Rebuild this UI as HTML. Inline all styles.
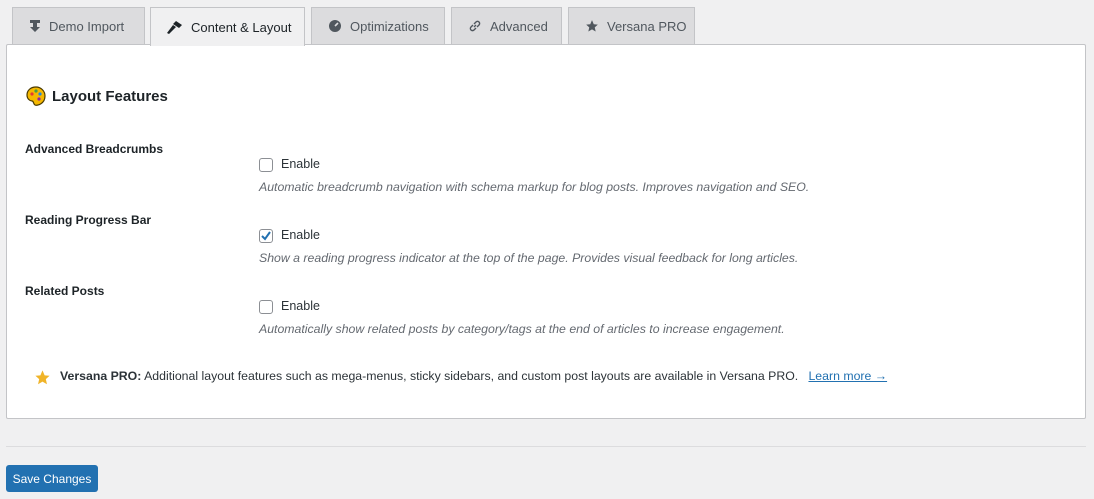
<!DOCTYPE html>
<html><head><meta charset="utf-8"><style>
*{box-sizing:border-box;margin:0;padding:0}
body{width:1094px;height:499px;background:#f0f0f1;font-family:"Liberation Sans",sans-serif;font-size:13px;color:#1d2327;position:relative;overflow:hidden}
.tab{position:absolute;top:7px;height:37px;background:#dcdcde;border:1px solid #c3c4c7;border-bottom:none;color:#50575e;font-size:13px;display:flex;align-items:center;padding-left:16px;gap:8px}
.tab.active{background:#f0f0f1;color:#1d2327;height:39px;z-index:2}
.panel{position:absolute;left:6px;top:44px;width:1080px;height:375px;background:#fff;border:1px solid #c3c4c7;border-radius:2px}
.abs{position:absolute;white-space:nowrap}
.lbl{font-weight:bold;font-size:12px;color:#1d2327}
.cb{position:absolute;width:14px;height:14px;border:1px solid #8c8f94;border-radius:3px;background:#fff}
.en{font-size:12.5px;color:#2c3338}
.desc{font-style:italic;font-size:12.3px;color:#646970}
</style></head><body>
<div class="tab" style="left:12px;width:133px"><svg width="12" height="14" viewBox="0 0 12 14"><path d="M1 1h10v3H1zM4 4h4v4h3l-5 5-5-5h3z" fill="#50575e"/></svg>Demo Import</div>
<div class="tab active" style="left:150px;width:155px"><svg width="16" height="14" viewBox="0 0 16 14"><path d="M9 1l6 4-3 3-6-4zM6 5l3 2-7 7-2-1z" fill="#1d2327"/></svg>Content &amp; Layout</div>
<div class="tab" style="left:311px;width:134px"><svg width="14" height="14" viewBox="0 0 14 14"><circle cx="7" cy="7" r="6" fill="#50575e"/><path d="M7 7l3-3" stroke="#dcdcde" stroke-width="1.6"/></svg>Optimizations</div>
<div class="tab" style="left:451px;width:111px"><svg width="14" height="14" viewBox="0 0 14 14"><path d="M6 8l2-2M5 6L3 8a2 2 0 003 3l2-2M9 8l2-2a2 2 0 00-3-3L6 5" stroke="#50575e" stroke-width="1.4" fill="none"/></svg>Advanced</div>
<div class="tab" style="left:568px;width:127px"><svg width="14" height="14" viewBox="0 0 24 24"><path d="M12 2l3 7 7 .6-5.3 4.7 1.6 7.2L12 17.8 5.7 21.5l1.6-7.2L2 9.6 9 9z" fill="#50575e"/></svg>Versana PRO</div>
<div class="panel"></div>
<svg class="abs" style="left:26px;top:86px" width="20" height="20" viewBox="0 0 20 20"><path d="M10 1C4 1 1 5 1 9c0 4 3 6 5 6 2 0 1 3 3 4 2 1 10-1 10-9 0-5-4-9-9-9z" fill="#f5b800" stroke="#4a3a00" stroke-width="1.2"/><circle cx="6" cy="8" r="1.6" fill="#e53935"/><circle cx="10" cy="5" r="1.6" fill="#43a047"/><circle cx="14" cy="8" r="1.6" fill="#1e88e5"/><circle cx="13" cy="13" r="1.6" fill="#8e24aa"/></svg>
<div class="abs" style="left:52px;top:88px;font-size:15px;font-weight:bold">Layout Features</div>
<div class="abs lbl" style="left:25px;top:142px">Advanced Breadcrumbs</div>
<div class="cb" style="left:259px;top:158px"></div>
<div class="abs en" style="left:281px;top:157px">Enable</div>
<div class="abs desc" style="left:259px;top:180px">Automatic breadcrumb navigation with schema markup for blog posts. Improves navigation and SEO.</div>
<div class="abs lbl" style="left:25px;top:213px">Reading Progress Bar</div>
<div class="cb" style="left:259px;top:229px"><svg width="12" height="12" viewBox="0 0 12 12" style="position:absolute;left:0;top:0"><path d="M2 6l3 3 5-7" stroke="#2271b1" stroke-width="2" fill="none"/></svg></div>
<div class="abs en" style="left:281px;top:228px">Enable</div>
<div class="abs desc" style="left:259px;top:251px">Show a reading progress indicator at the top of the page. Provides visual feedback for long articles.</div>
<div class="abs lbl" style="left:25px;top:284px">Related Posts</div>
<div class="cb" style="left:259px;top:300px"></div>
<div class="abs en" style="left:281px;top:299px">Enable</div>
<div class="abs desc" style="left:259px;top:322px">Automatically show related posts by category/tags at the end of articles to increase engagement.</div>
<svg class="abs" style="left:34px;top:369px" width="17" height="17" viewBox="0 0 24 24"><path d="M12 2l3 7 7 .6-5.3 4.7 1.6 7.2L12 17.8 5.7 21.5l1.6-7.2L2 9.6 9 9z" fill="#f0b429"/></svg>
<div class="abs" style="left:60px;top:369px;font-size:12.3px;color:#2c3338"><b>Versana PRO:</b> Additional layout features such as mega-menus, sticky sidebars, and custom post layouts are available in Versana PRO. &nbsp; <span style="color:#2271b1;text-decoration:underline">Learn more →</span></div>
<div class="abs" style="left:6px;top:446px;width:1080px;height:1px;background:#dcdcde"></div>
<div class="abs" style="left:6px;top:465px;width:92px;height:27px;background:#2271b1;border-radius:3px;color:#fff;font-size:12px;display:flex;align-items:center;justify-content:center">Save Changes</div>
</body></html>
